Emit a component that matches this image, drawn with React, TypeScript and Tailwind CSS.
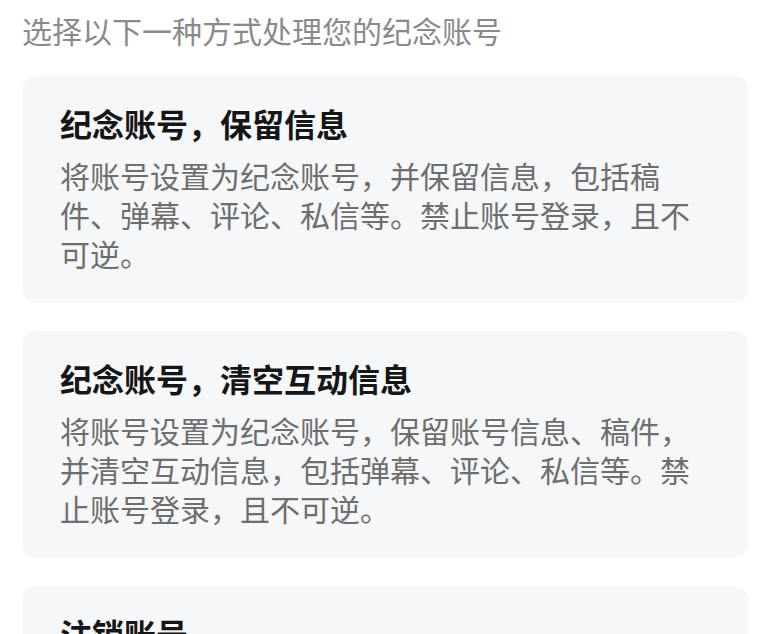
const options = [
  {
    title: "纪念账号，保留信息",
    desc: "将账号设置为纪念账号，并保留信息，包括稿件、弹幕、评论、私信等。禁止账号登录，且不可逆。",
  },
  {
    title: "纪念账号，清空互动信息",
    desc: "将账号设置为纪念账号，保留账号信息、稿件，并清空互动信息，包括弹幕、评论、私信等。禁止账号登录，且不可逆。",
  },
  {
    title: "注销账号",
    desc: "注销账号后，账号内的所有信息将被清除，且不可恢复。",
  },
];

export default function App() {
  return (
    <div
      className="min-h-screen bg-white pl-[22px] pr-[12px] pt-[10px] pb-8"
      style={{ fontFamily: '"Noto Sans CJK SC", "Noto Sans", sans-serif' }}
    >
      <p className="text-[30px] leading-[40px] text-[#8a8a8a]">选择以下一种方式处理您的纪念账号</p>

      <div className="mt-[26px] flex flex-col gap-[28px]">
        {options.map((o) => (
          <div key={o.title} className="rounded-[14px] bg-[#f6f7f9] px-[38px] pt-[27px] pb-[30px]">
            <h2 className="text-[32px] leading-[40px] font-bold text-[#161616]">{o.title}</h2>
            <p className="mt-[13px] text-[30px] leading-[39px] text-[#6e6e6e]">{o.desc}</p>
          </div>
        ))}
      </div>
    </div>
  );
}
